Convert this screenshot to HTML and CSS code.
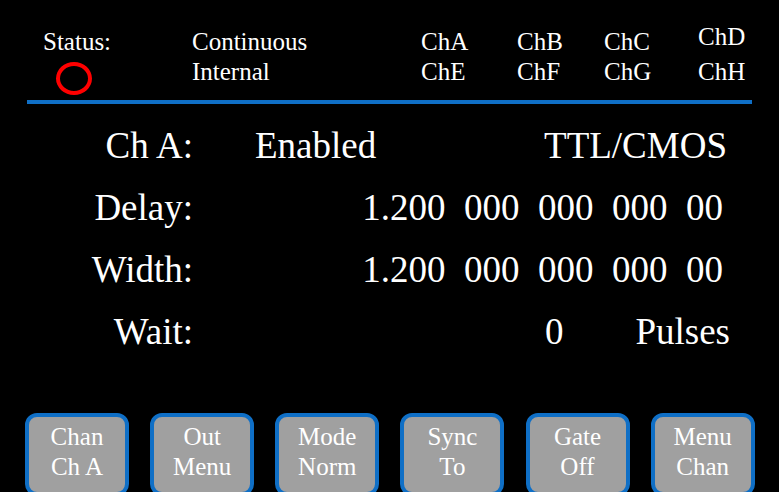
FILE: index.html
```html
<!DOCTYPE html>
<html>
<head>
<meta charset="utf-8">
<link rel="stylesheet" href="styles.css">
</head>
<body>
<div class="screen">
  <div class="header">
    <div class="col status">
      <div class="line">Status:</div>
      <div class="ring"></div>
    </div>
    <div class="col mode">
      <div class="line">Continuous</div>
      <div class="line">Internal</div>
    </div>
    <div class="col cha">
      <div class="line">ChA</div>
      <div class="line">ChE</div>
    </div>
    <div class="col chb">
      <div class="line">ChB</div>
      <div class="line">ChF</div>
    </div>
    <div class="col chc">
      <div class="line">ChC</div>
      <div class="line">ChG</div>
    </div>
    <div class="col chd">
      <div class="line raised">ChD</div>
      <div class="line">ChH</div>
    </div>
  </div>
  <div class="rule"></div>
  <div class="main">
    <div class="row">
      <div class="label">Ch A:</div>
      <div class="enabled">Enabled</div>
      <div class="level">TTL/CMOS</div>
    </div>
    <div class="row">
      <div class="label">Delay:</div>
      <div class="num">1.200  000  000  000  00</div>
    </div>
    <div class="row">
      <div class="label">Width:</div>
      <div class="num">1.200  000  000  000  00</div>
    </div>
    <div class="row">
      <div class="label">Wait:</div>
      <div class="count">0</div>
      <div class="unit">Pulses</div>
    </div>
  </div>
  <div class="buttons">
    <div class="btn"><span>Chan</span><span>Ch A</span></div>
    <div class="btn"><span>Out</span><span>Menu</span></div>
    <div class="btn"><span>Mode</span><span>Norm</span></div>
    <div class="btn"><span>Sync</span><span>To</span></div>
    <div class="btn"><span>Gate</span><span>Off</span></div>
    <div class="btn"><span>Menu</span><span>Chan</span></div>
  </div>
</div>
</body>
</html>
```
FILE: styles.css
```css
html, body {
  margin: 0;
  padding: 0;
  background: #000;
}
body {
  width: 779px;
  height: 492px;
  overflow: hidden;
  font-family: "Liberation Serif", "Times New Roman", serif;
  color: #fff;
}
.screen {
  width: 779px;
  height: 492px;
  display: flex;
  flex-direction: column;
}
.screen > * { flex: none; }
.header {
  height: 100px;
  box-sizing: border-box;
  padding-top: 27px;
  display: flex;
  font-size: 25px;
  line-height: 30px;
}
.line { white-space: nowrap; }
.status { margin-left: 43px; width: 149px; }
.mode { width: 229px; }
.cha { width: 96px; }
.chb { width: 87px; }
.chc { width: 94px; }
.raised { margin-top: -5px; margin-bottom: 5px; }
.ring {
  width: 28px;
  height: 25px;
  margin-top: 5px;
  margin-left: 13px;
  border: 4px solid #ff0000;
  border-radius: 50%;
}
.rule {
  height: 4px;
  margin: 0 27px 0 27px;
  background: #0f6fc6;
}
.main {
  margin-top: 11px;
  font-size: 37px;
  line-height: 62px;
}
.row {
  display: flex;
  white-space: pre;
}
.label {
  width: 193px;
  text-align: right;
}
.enabled { margin-left: 62px; }
.level { margin-left: auto; margin-right: 52px; }
.num { margin-left: auto; margin-right: 56px; }
.count { margin-left: auto; }
.unit { margin-left: 72px; margin-right: 49px; }
.buttons {
  margin-top: auto;
  height: 79px;
  padding-left: 25px;
  display: flex;
  gap: 21.14px;
  align-items: flex-start;
}
.btn {
  flex: none;
  width: 104px;
  height: 83px;
  box-sizing: border-box;
  border: 4px solid #0f6fc6;
  border-radius: 12px;
  background: #a0a0a0;
  padding-top: 5px;
  display: flex;
  flex-direction: column;
  align-items: center;
  font-size: 25px;
  line-height: 30px;
  color: #fff;
}
```
